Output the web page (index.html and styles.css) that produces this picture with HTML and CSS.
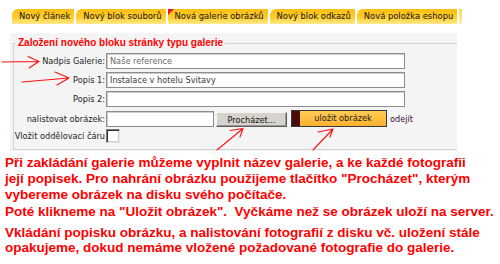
FILE: index.html
```html
<!DOCTYPE html>
<html lang="cs">
  <head>
    <meta charset="UTF-8" />
    <title>Nová galerie obrázků</title>
    <link rel="stylesheet" href="styles.css">
  </head>
  <body>
    <!-- Tabs -->
    <div class="tabs">
      <a class="tab" href="#">Nový článek</a>
      <a class="tab" href="#">Nový blok souborů</a>
      <a class="tab active" href="#">Nová galerie obrázků</a>
      <a class="tab" href="#">Nový blok odkazů</a>
      <a class="tab" href="#">Nová položka eshopu</a>
      <span class="tab-edge"></span>
    </div>

    <!-- Gallery form -->
    <div class="panel">
      <fieldset>
        <legend>Založení nového bloku stránky typu galerie</legend>
        <div class="row">
          <label>Nadpis Galerie:</label>
          <span class="field muted">Naše reference</span>
        </div>
        <div class="row">
          <label>Popis 1:</label>
          <span class="field">Instalace v hotelu Svitavy</span>
        </div>
        <div class="row">
          <label>Popis 2:</label>
          <span class="field"></span>
        </div>
        <div class="row">
          <label>nalistovat obrázek:</label>
          <div class="upload">
            <span class="field short"></span>
            <button class="browse">Procházet...</button>
            <button class="save">uložit obrázek</button>
            <a class="leave" href="#">odejít</a>
          </div>
        </div>
        <div class="row">
          <label>Vložit oddělovací čáru</label>
          <span class="check"></span>
        </div>
      </fieldset>
    </div>

    <!-- Help text -->
    <div class="help">
      <p>Při zakládání galerie můžeme vyplnit název galerie, a ke každé fotografii<br>její popisek. Pro nahrání obrázku použijeme tlačítko "Procházet", kterým<br>vybereme obrázek na disku svého počítače.</p>
      <p class="next">Poté klikneme na "Uložit obrázek".&nbsp; Vyčkáme než se obrázek uloží na server.</p>
      <p class="last">Vkládání popisku obrázku, a nalistování fotografií z disku vč. uložení stále<br>opakujeme, dokud nemáme vložené požadované fotografie do galerie.</p>
    </div>

    <!-- Hand drawn arrows -->
    <svg class="arrows" width="500" height="264" viewBox="0 0 500 264">
      <g fill="none" stroke="#ff1010" stroke-width="1.1" stroke-linecap="round" stroke-linejoin="round">
        <path d="M2 62 L39 61.5 M28 56.5 L39 61.5 L29 68" />
        <path d="M22 82 L69 78 M55 72 L69 78 L57 85" />
        <path d="M217 150 L243 128.5 M230 130.5 L243 128.5 L240 137" />
        <path d="M313 150 L333 129 M318 132 L333 129 L330 137" />
      </g>
    </svg>
  </body>
</html>
```

FILE: styles.css
```css
:root {
  --tab-top: #fbbf12;
  --tab-mid: #ffcc2c;
  --tab-bottom: #ffe98c;
  --panel: #f4f4f4;
  --red: #ff0000;
  --text: #1e1e1e;
}

body {
  margin: 0;
  width: 500px;
  height: 264px;
  overflow: hidden;
  position: relative;
  background: #fff;
  color: var(--text);
  font-family: "DejaVu Sans", Verdana, sans-serif;
  font-size: 8.2px;
}

/* Tabs */
.tabs {
  display: flex;
  gap: 2px;
  padding: 9px 0 0 12px;
  height: 15px;
}

.tab {
  position: relative;
  height: 15px;
  line-height: 15px;
  padding: 0 4px 0 7px;
  border-radius: 6px 0 0 0;
  background: linear-gradient(var(--tab-top), var(--tab-mid) 55%, var(--tab-bottom));
  color: #111;
  text-decoration: none;
  font-size: 8.4px;
  white-space: nowrap;
}

.tab.active::before {
  content: "";
  position: absolute;
  left: 0;
  top: 0;
  border-top: 6px solid #e8102a;
  border-right: 6px solid transparent;
}

.tab-edge {
  width: 3px;
  height: 15px;
  background: linear-gradient(#ffd84a, #fff0b0);
}

/* Form panel */
.panel {
  margin: 9px 0 0 10px;
  width: 447px;
  padding: 4px 0 1px;
  background: var(--panel);
}

fieldset {
  margin: 0 0 0 3px;
  padding: 4px 0 6px 0;
  border: 1px solid #d2d2d2;
  border-right: 0;
}

legend {
  margin-left: 2px;
  padding: 0 2px;
  color: var(--red);
  font: bold 10px/12px "Liberation Sans", Arial, sans-serif;
}

.row {
  display: grid;
  grid-template-columns: 91px auto;
  column-gap: 1px;
  align-items: center;
  height: 16px;
  margin-bottom: 3px;
}

.row:last-child {
  height: 14px;
  margin-bottom: 0;
}

.row label {
  text-align: right;
  white-space: nowrap;
}

.field {
  display: block;
  box-sizing: border-box;
  width: 299px;
  height: 16px;
  padding-left: 3px;
  line-height: 14px;
  border: 1px solid #8c8c8c;
  box-shadow: inset 1px 1px #cdcdcd;
  background: #fff;
  color: #3a3a3a;
}

.field.muted {
  color: #6a6a6a;
}

.field.short {
  width: 108px;
}

.upload {
  display: flex;
  align-items: center;
}

.browse {
  box-sizing: border-box;
  width: 71px;
  height: 15px;
  margin: 2px 0 0 2px;
  padding: 0;
  font: inherit;
  color: #111;
  background: #d6d3cd;
  border: 1px solid;
  border-color: #f4f4f4 #5a5a5a #5a5a5a #f4f4f4;
  box-shadow: inset -1px -1px #9a9a9a;
}

.save {
  box-sizing: border-box;
  width: 96px;
  height: 17px;
  margin: -1px 0 0 4px;
  padding: 0 0 0 8px;
  font: inherit;
  color: #1a1a1a;
  border: 1px solid #383838;
  background: linear-gradient(#ffcc55, #fbb12e);
  box-shadow: inset 8px 0 0 #4a0a0a;
}

.leave {
  margin-left: 3px;
  color: #3a0a3a;
  text-decoration: none;
}

.check {
  box-sizing: border-box;
  width: 14px;
  height: 14px;
  background: #fff;
  border: 1px solid;
  border-color: #7a7a7a #e6e6e6 #e6e6e6 #7a7a7a;
  box-shadow: inset 1px 1px #303030, inset -1px -1px #d0d0d0;
}

/* Help text */
.help {
  margin: 4px 0 0 5px;
  color: var(--red);
  font: bold 13.5px/16px "Liberation Sans", Arial, sans-serif;
  white-space: nowrap;
}

.help p {
  margin: 0;
}

.help .next {
  margin-top: 1px;
}

.help .last {
  margin-top: 5px;
  line-height: 15px;
}

/* Arrow annotations over the form */
.arrows {
  position: absolute;
  left: 0;
  top: 0;
  pointer-events: none;
}
```
